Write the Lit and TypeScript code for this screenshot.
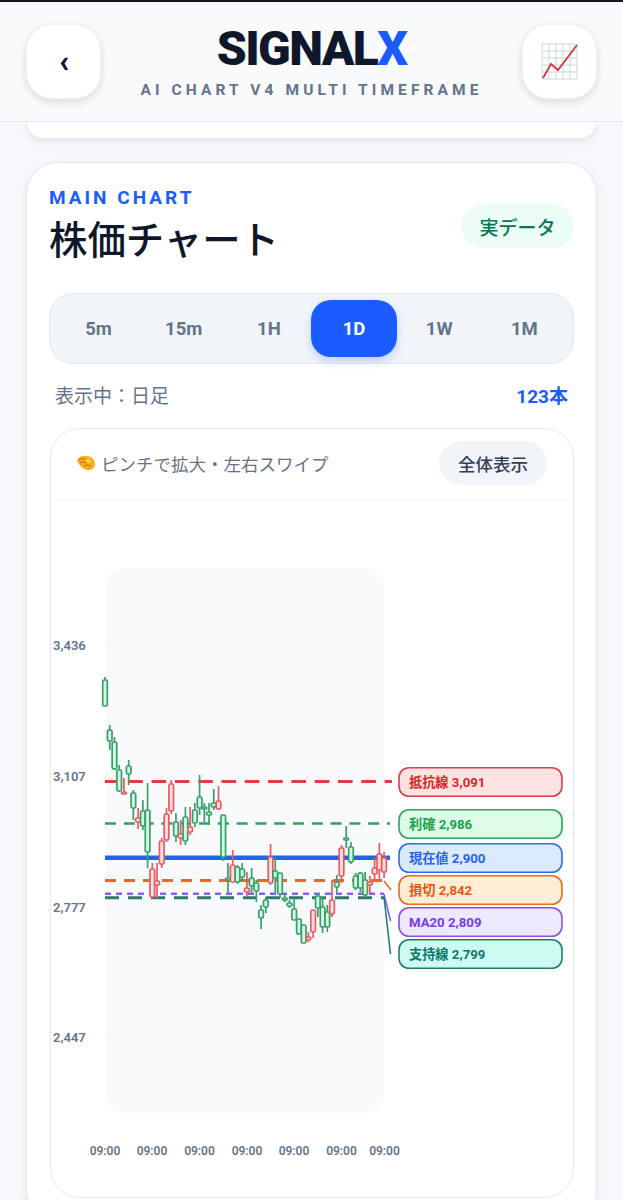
import { LitElement, html, css, svg } from "lit";
import { customElement } from "lit/decorators.js";

type C = [string, number, number, number, number];
const CANDLES: C[] = [
  ["g",677,706,680,706],["g",725,750,730,741],["g",737,770,742,769],["g",765,792,770,791],["r",778,794,792,794],
  ["g",760,785,766,774],["g",790,820,793,808],["r",808,829,818,822],["g",800,830,811,826],["g",783,868,810,852],
  ["r",863,898,869,897],["r",863,898,881,885],["r",838,868,841,864],["r",808,842,814,840],["r",780,814,784,811],
  ["g",813,842,822,836],["r",820,845,834,838],["g",807,845,817,841],["r",807,835,827,832],["g",803,827,810,823],
  ["g",775,815,797,808],["g",803,822,807,809],["g",803,825,812,815],["g",789,810,803,807],["r",786,810,801,809],
  ["g",815,861,815,857],["g",863,893,878,880],["r",850,882,865,882],["g",865,884,867,882],["g",863,882,869,877],
  ["r",872,896,888,892],["g",868,894,878,886],["g",880,902,883,891],["g",905,929,910,918],["g",897,913,900,907],
  ["r",844,885,857,883],["g",858,893,871,878],["g",873,898,873,894],["g",893,902,898,900],["g",900,908,903,906],
  ["g",898,920,909,920],["g",919,935,919,934],["g",925,943,925,943],["r",932,942,937,940],["r",910,938,910,932],
  ["g",893,917,896,908],["g",897,933,907,927],["g",905,932,912,927],["r",880,917,900,914],["g",875,893,882,887],
  ["r",845,883,848,876],["g",826,848,838,840],["g",842,864,847,862],["g",873,890,876,888],["g",872,892,873,888],
  ["g",872,898,880,895],["r",876,895,882,885],["r",858,882,868,874],["r",843,880,854,870],["r",852,878,858,872],
];

const LABELS: [string, number, string][] = [
  ["抵抗線 3,091", 767, "res"],
  ["利確 2,986", 809, "tp"],
  ["現在値 2,900", 843, "now"],
  ["損切 2,842", 875, "sl"],
  ["MA20 2,809", 907, "ma"],
  ["支持線 2,799", 939, "sup"],
];

const GRID: [string, number][] = [["3,436", 645], ["3,107", 776], ["2,777", 907], ["2,447", 1037]];
const TIMES = [105, 152, 199.5, 247, 294, 341.5, 384.5];
const TABS = ["5m", "15m", "1H", "1D", "1W", "1M"];

@customElement("app-root")
export class AppRoot extends LitElement {
  static styles = css`
    :host {
      display: block;
      height: 1200px;
      overflow: hidden;
      background: #f6f8fc;
      font-family: Roboto, "Noto Sans CJK JP", sans-serif;
      color: #0f172a;
      box-sizing: border-box;
      border-top: 2px solid #15181d;
    }
    * { box-sizing: border-box; }
    header {
      height: 120px;
      padding: 22px 26px 0;
      display: flex;
      justify-content: space-between;
      align-items: flex-start;
      background: #f8fafc;
      border-bottom: 1px solid #e6eaf0;
    }
    .iconbtn {
      width: 75px;
      height: 75px;
      border-radius: 26px;
      background: #fff;
      border: 1px solid #eef1f5;
      box-shadow: 0 3px 8px rgba(15, 23, 42, 0.13);
      display: flex;
      align-items: center;
      justify-content: center;
    }
    .back { font-size: 32px; font-weight: 900; color: #0f172a; line-height: 1; padding-left: 1px; padding-bottom: 2px; }
    .brand { flex: 1; display: flex; flex-direction: column; align-items: center; }
    .logo {
      font-size: 48px;
      line-height: 50px;
      font-weight: 900;
      letter-spacing: -1.6px;
      color: #0f172a;
    }
    .logo span { color: #1a5cff; }
    .sub {
      margin-top: 7px;
      font-size: 15.5px;
      line-height: 18px;
      font-weight: 700;
      letter-spacing: 4.1px;
      color: #64748b;
    }
    .prev {
      margin: 0 26px 23px;
      height: 17px;
      background: #fff;
      border-radius: 0 0 32px 32px;
      border: 1px solid #e8ecf2;
      border-top: none;
      box-shadow: 0 3px 6px rgba(15, 23, 42, 0.08);
    }
    .card {
      margin: 0 26px;
      height: 1060px;
      background: #fff;
      border: 1px solid #e3e8ef;
      border-radius: 32px;
      padding: 24px 22px 0 22px;
      box-shadow: 0 3px 8px rgba(15, 23, 42, 0.07);
    }
    .head { display: flex; justify-content: space-between; align-items: flex-start; }
    .eyebrow {
      font-size: 19px;
      line-height: 21px;
      font-weight: 700;
      letter-spacing: 3px;
      color: #1a5cff;
    }
    h1 {
      margin: 7px 0 0;
      font-size: 38.4px;
      line-height: 52px;
      font-weight: 500;
      color: #0f172a;
    }
    .badge {
      margin-top: 17px;
      height: 44px;
      width: 113px;
      border-radius: 22px;
      background: #ecfdf5;
      color: #047857;
      font-size: 19px;
      font-weight: 500;
      display: flex;
      align-items: center;
      justify-content: center;
    }
    .tabs {
      margin-top: 26px;
      height: 71px;
      border-radius: 24px;
      background: #f1f5f9;
      border: 1px solid #e2e8f0;
      padding: 6px;
      display: grid;
      grid-template-columns: repeat(6, 1fr);
    }
    .tab {
      border-radius: 20px;
      display: flex;
      align-items: center;
      justify-content: center;
      font-size: 18.5px;
      font-weight: 700;
      color: #64748b;
    }
    .tab.on { background: #1a5cff; color: #fff; box-shadow: 0 4px 8px rgba(26, 92, 255, 0.25); }
    .status {
      margin-top: 17px;
      padding: 0 6px;
      display: flex;
      justify-content: space-between;
      align-items: center;
      height: 27px;
      font-size: 19px;
      color: #64748b;
    }
    .status b { color: #1a5cff; font-weight: 700; }
    .panel {
      margin-top: 20px;
      margin-left: 1px;
      height: 770px;
      border: 1px solid #e4e9ef;
      border-radius: 30px;
      overflow: hidden;
      background: #fff;
    }
    .tools {
      height: 71px;
      padding: 0 26px 2px 25px;
      border-bottom: 1px solid #f1f4f8;
      display: flex;
      align-items: center;
      justify-content: space-between;
      font-size: 17.5px;
      color: #64748b;
    }
    .hint { display: flex; align-items: center; gap: 5px; }
    .fit {
      width: 108px;
      height: 44px;
      border-radius: 22px;
      background: #f1f5f9;
      color: #334155;
      font-size: 17.5px;
      font-weight: 500;
      display: flex;
      align-items: center;
      justify-content: center;
    }
    svg.chart { display: block; }
    .ytxt { font-size: 13px; font-weight: 600; fill: #64748b; }
    .xtxt { font-size: 12px; font-weight: 600; fill: #64748b; text-anchor: middle; }
    .ltxt { font-size: 13.2px; font-weight: 700; }
    .res rect { fill: #fee2e2; stroke: #dc3f45; } .res text { fill: #dc2626; }
    .tp rect { fill: #dcfce7; stroke: #2fa25e; } .tp text { fill: #16a34a; }
    .now rect { fill: #dbeafe; stroke: #2f6be8; } .now text { fill: #2563eb; }
    .sl rect { fill: #ffedd5; stroke: #ea6a1f; } .sl text { fill: #ea580c; }
    .ma rect { fill: #ede9fe; stroke: #8b4fe8; } .ma text { fill: #7c3aed; }
    .sup rect { fill: #ccfbf1; stroke: #237a6d; } .sup text { fill: #0f766e; }
  `;

  private candle(c: C, i: number) {
    const [k, wt, wb, bt, bb] = c;
    const x = 105 + i * 4.73;
    const stroke = k === "g" ? "#35a069" : "#ea5a62";
    const fill = k === "g" ? "#d8f6e4" : "#fde2e2";
    const w = bb - bt < 5 ? 5 : 4.6;
    return svg`<line x1=${x} x2=${x} y1=${wt} y2=${wb} stroke=${stroke} stroke-width="1.7"/>
      <rect x=${x - w / 2} y=${bt} width=${w} height=${bb - bt} rx="1.4" fill=${fill} stroke=${stroke} stroke-width="1.7"/>`;
  }

  private chart() {
    return svg`
      <rect x="106" y="568" width="278" height="545" rx="18" fill="#f8fafc"/>
      ${GRID.map(([t, y]) => svg`
        <line x1="106" x2="384" y1=${y} y2=${y} stroke="#e8ecf1" stroke-width="1.5" stroke-dasharray="2 6"/>
        <text class="ytxt" x="53" y=${y + 5}>${t}</text>`)}
      <line x1="105" x2="392" y1="781.5" y2="781.5" stroke="#e23b40" stroke-width="3" stroke-dasharray="14.6 8.7"/>
      <line x1="105" x2="390" y1="823.5" y2="823.5" stroke="#2fa25e" stroke-width="2.5" stroke-dasharray="11 7.8"/>
      <line x1="105" x2="390" y1="857.7" y2="857.7" stroke="#2463e6" stroke-width="4.6"/>
      <line x1="105" x2="384" y1="880.5" y2="880.5" stroke="#ea6a25" stroke-width="3" stroke-dasharray="11 8"/>
      <line x1="384" x2="391" y1="881" y2="890" stroke="#ea6a25" stroke-width="1.6"/>
      <line x1="105" x2="384" y1="893.7" y2="893.7" stroke="#8b5cf6" stroke-width="2.6" stroke-dasharray="6 5"/>
      <line x1="384" x2="390.5" y1="894" y2="921" stroke="#8b5cf6" stroke-width="1.6"/>
      <line x1="105" x2="384" y1="897.7" y2="897.7" stroke="#2c7a6c" stroke-width="3" stroke-dasharray="14 9"/>
      <line x1="384" x2="390.5" y1="897" y2="954" stroke="#2c7a6c" stroke-width="1.6"/>
      ${CANDLES.map((c, i) => this.candle(c, i))}
      ${LABELS.map(([t, y, cls]) => svg`<g class=${cls}>
        <rect x="399" y=${y + 0.75} width="163" height="28.5" rx="10" stroke-width="1.6"/>
        <text class="ltxt" x="409" y=${y + 20}>${t}</text></g>`)}
      ${TIMES.map((x) => svg`<text class="xtxt" x=${x} y="1155">09:00</text>`)}
    `;
  }

  private growth() {
    const xs = [0, 7, 14, 21, 28, 35];
    return html`<svg width="38" height="38" viewBox="-1 -1 38 38">
      ${xs.map((v) => svg`<line x1=${v} x2=${v} y1="0" y2="35" stroke="#c3d3d6" stroke-width="0.9"/>
        <line x1="0" x2="35" y1=${v} y2=${v} stroke="#c3d3d6" stroke-width="0.9"/>`)}
      <polyline points="1,34 9,20 16,26 35,1" fill="none" stroke="#d23f44" stroke-width="1.9"/>
    </svg>`;
  }

  private pinch() {
    return html`<svg width="20" height="18" viewBox="0 0 20 18">
      <path d="M1 6 C3 2 8 1 12 2 C16 3 19 6 19 10 C19 14 15 17 11 16 C7 15 3 12 1 6Z" fill="#f9b115"/>
      <path d="M3 6 C5 4 9 4 11 6 M4 9 C7 7 10 8 11 9 M8 12 C10 11 13 11 15 12" fill="none" stroke="#c97a0a" stroke-width="1.2"/>
      <ellipse cx="12" cy="7" rx="2.6" ry="1.8" fill="#ffd76a"/>
    </svg>`;
  }

  render() {
    return html`
      <header>
        <div class="iconbtn back">‹</div>
        <div class="brand">
          <div class="logo">SIGNAL<span>X</span></div>
          <div class="sub">AI CHART V4 MULTI TIMEFRAME</div>
        </div>
        <div class="iconbtn">${this.growth()}</div>
      </header>
      <div class="prev"></div>
      <section class="card">
        <div class="head">
          <div>
            <div class="eyebrow">MAIN CHART</div>
            <h1>株価チャート</h1>
          </div>
          <div class="badge">実データ</div>
        </div>
        <div class="tabs">
          ${TABS.map((t) => html`<div class="tab ${t === "1D" ? "on" : ""}">${t}</div>`)}
        </div>
        <div class="status"><span>表示中：日足</span><b>123本</b></div>
        <div class="panel">
          <div class="tools">
            <div class="hint">${this.pinch()}<span>ピンチで拡大・左右スワイプ</span></div>
            <div class="fit">全体表示</div>
          </div>
          <svg class="chart" width="522" height="698" viewBox="51 500 522 698">${this.chart()}</svg>
        </div>
      </section>
    `;
  }
}
